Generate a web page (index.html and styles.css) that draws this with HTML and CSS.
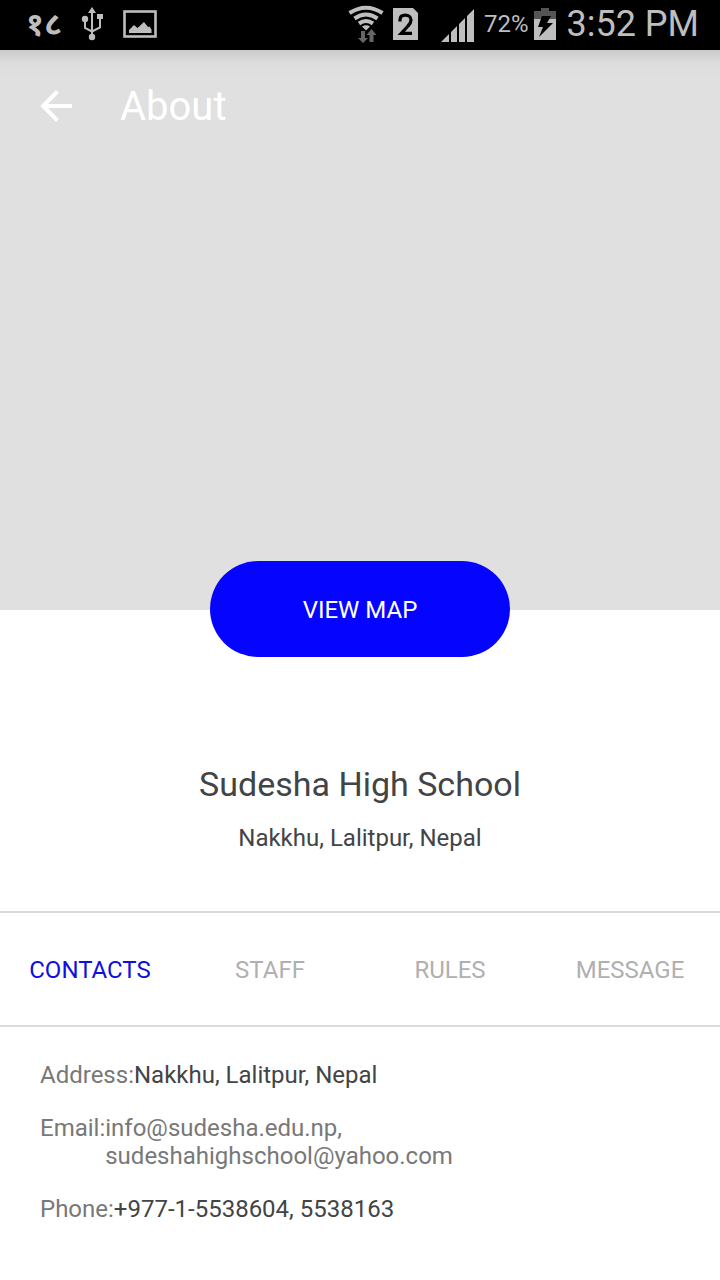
FILE: index.html
```html
<!DOCTYPE html>
<html lang="en">
<head>
<meta charset="utf-8">
<meta name="viewport" content="width=device-width, initial-scale=1">
<title>About</title>
<link rel="stylesheet" href="styles.css">
</head>
<body>
<div class="status-bar">
  <div class="status-left">
    <span class="date" lang="hi">१८</span>
    <svg class="usb" width="22" height="34" viewBox="0 0 22 34" aria-hidden="true">
      <path d="M11 4v25M11 24.500L4 21v-9M11 24.500l8-4v-9" fill="none" stroke="#bebebe" stroke-width="2"/>
      <path d="M11 0l4 6H7z" fill="#bebebe"/>
      <circle cx="4" cy="12" r="3.2" fill="#bebebe"/>
      <rect x="16" y="7" width="6" height="5" fill="#bebebe"/>
      <circle cx="11" cy="30" r="3.2" fill="#bebebe"/>
    </svg>
    <svg width="34" height="30" viewBox="0 0 34 30" aria-hidden="true">
      <rect x="1.500" y="2.500" width="31" height="25" fill="none" stroke="#bebebe" stroke-width="2.6"/>
      <path d="M6 24v-3l5-5 3.500 3L21 13l4 5 1.500-.5 2 3V24z" fill="#bebebe"/>
    </svg>
  </div>
  <div class="status-right">
    <svg class="wifi" width="36" height="38" viewBox="0 0 36 38" aria-hidden="true">
      <g fill="none" stroke="#bebebe" stroke-width="4">
        <path d="M1.500 8Q18 -2.500 34.500 8"/>
        <path d="M6.500 13.500Q18 5.500 29.500 13.500"/>
        <path d="M11 18.500Q18 13.500 25 18.500"/>
      </g>
      <path d="M14 21.500q4-2.500 8 0l-4 4z" fill="#bebebe"/>
      <path d="M13 26h4v7h3l-5 5-5-5h3zM23.500 24l5 6h-3v7h-4v-7h-3z" fill="#666"/>
    </svg>
    <svg class="sim" width="26" height="34" viewBox="0 0 26 34" aria-hidden="true">
      <path d="M0 1h20l5 5v27H0z" fill="#bebebe"/>
      <path d="M7 14.500V13c0-3 2-4.800 5.300-4.800S18 10 18 13c0 2.300-1 4-3 6l-6.800 7.400h10.800" fill="none" stroke="#000" stroke-width="3.200"/>
    </svg>
    <svg class="signal" width="34" height="34" viewBox="0 0 34 34" aria-hidden="true">
      <path d="M0 33l8-8v8zM10 23l6-6v16h-6zM18 15l6-6v24h-6zM26 7l7-7v33h-7z" fill="#bebebe"/>
    </svg>
    <span class="percent">72%</span>
    <svg class="battery" width="22" height="32" viewBox="0 0 22 32" aria-hidden="true">
      <path d="M0 3h7V0h8v3h7v8H0z" fill="#555"/>
      <path d="M0 11h22v21H0z" fill="#bebebe"/>
      <path d="M8 8h9l-4 7h6L5 29l4-10H4z" fill="#000"/>
    </svg>
    <span class="clock">3:52 PM</span>
  </div>
</div>

<header class="hero">
  <div class="toolbar">
    <button class="back" type="button" aria-label="Back">
      <svg width="32" height="32" viewBox="0 0 32 32" aria-hidden="true">
        <path d="M17.500 1.500L3 16l14.500 14.500M3 16h29" fill="none" stroke="#fff" stroke-width="4"/>
      </svg>
    </button>
    <h1 class="title">About</h1>
  </div>
</header>

<main>
  <div class="map-row"><button class="map-button" type="button">VIEW MAP</button></div>
  <section class="school">
    <h2 class="school-name">Sudesha High School</h2>
    <p class="school-place">Nakkhu, Lalitpur, Nepal</p>
  </section>
  <nav class="tabs">
    <button class="tab active" type="button" aria-current="true">CONTACTS</button>
    <button class="tab" type="button">STAFF</button>
    <button class="tab" type="button">RULES</button>
    <button class="tab" type="button">MESSAGE</button>
  </nav>
  <dl class="contacts">
    <div class="contact"><dt>Address:</dt><dd class="strong">Nakkhu, Lalitpur, Nepal</dd></div>
    <div class="contact"><dt>Email:</dt><dd>info@sudesha.edu.np,<br>sudeshahighschool@yahoo.com</dd></div>
    <div class="contact"><dt>Phone:</dt><dd class="strong">+977-1-5538604, 5538163</dd></div>
  </dl>
</main>
</body>
</html>
```
FILE: styles.css
```css
* {
  box-sizing: border-box;
}

body,
h1,
h2,
p,
dl,
dd {
  margin: 0;
}

body {
  background: #fff;
  color: #424446;
  font-family: Roboto, "Noto Sans", sans-serif;
  font-size: 24px;
  line-height: 28px;
}

button {
  border: 0;
  padding: 0;
  background: none;
  color: inherit;
  font: inherit;
  cursor: pointer;
}

svg {
  display: block;
  flex: none;
}

.status-bar {
  display: flex;
  justify-content: space-between;
  align-items: center;
  height: 50px;
  padding: 0 21px 2px 26px;
  background: #000;
  color: #bebebe;
}

.status-left,
.status-right {
  display: flex;
  align-items: center;
}

.status-left {
  gap: 20px;
}

.date {
  width: 35px;
  font-size: 32px;
  font-weight: 700;
}

.sim {
  margin-left: 9px;
}

.signal {
  margin: 4px 9px 0 22px;
}

.battery {
  margin: 0 11px 0 5px;
}

.clock {
  font-size: 36px;
}

.hero {
  height: 560px;
  background: linear-gradient(#cacaca, #dcdcdc 12px, #e0e0e0 28px);
}

.toolbar {
  display: flex;
  align-items: center;
  gap: 48px;
  height: 112px;
  padding: 0 40px;
  color: #fff;
}

.title {
  padding-top: 2px;
  font-size: 40px;
  font-weight: 400;
  line-height: 48px;
}

.map-row {
  display: flex;
  justify-content: center;
  margin-top: -49px;
}

.map-button {
  width: 300px;
  height: 96px;
  padding-top: 2px;
  border-radius: 48px;
  background: #0505ff;
  color: #fff;
}

.school {
  padding: 106px 16px 59px;
  text-align: center;
}

.school-name {
  margin-bottom: 19px;
  font-size: 34px;
  font-weight: 400;
  line-height: 42px;
}

.tabs {
  display: grid;
  grid-template-columns: repeat(4, 1fr);
  border-top: 2px solid #dadada;
  border-bottom: 2px solid #dadada;
}

.tab {
  height: 112px;
  padding-top: 2px;
  color: #b0b0b0;
}

.tab.active {
  color: #0f0fe0;
}

.contacts {
  display: grid;
  gap: 25px;
  padding: 34px 40px;
}

.contact {
  display: flex;
  color: #787878;
}

.strong {
  color: #424446;
}
```
